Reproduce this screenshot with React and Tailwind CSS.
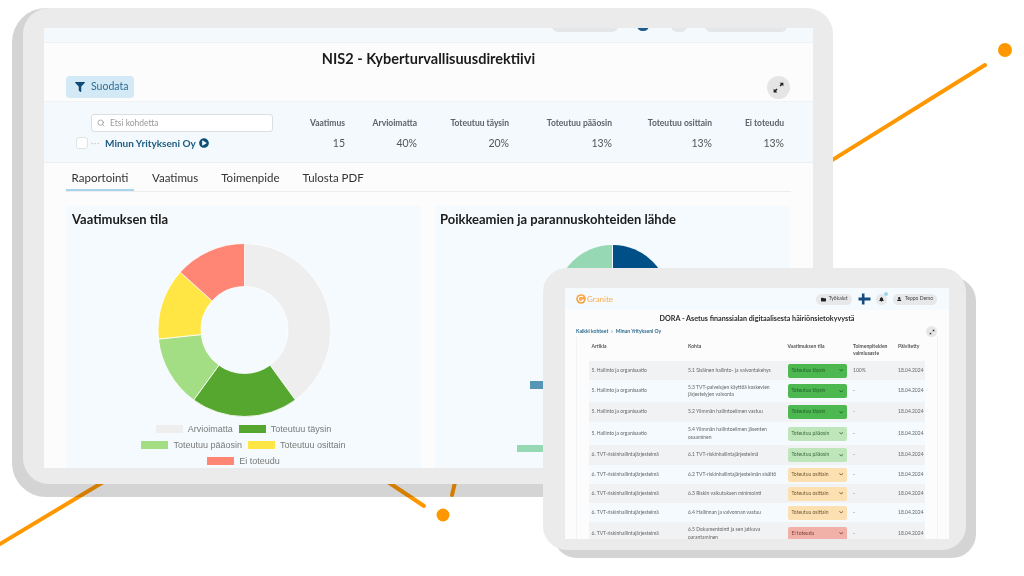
import React from "react";
import { FaFilter, FaPlayCircle, FaBell, FaUser, FaFolder, FaChevronDown } from "react-icons/fa";
import { FiSearch } from "react-icons/fi";

const summary = [
  ["Vaatimus", "15", "w-[60px]"],
  ["Arvioimatta", "40%", "w-[72px]"],
  ["Toteutuu täysin", "20%", "w-[92px]"],
  ["Toteutuu pääosin", "13%", "w-[103px]"],
  ["Toteutuu osittain", "13%", "w-[100px]"],
  ["Ei toteudu", "13%", "w-[72px]"],
];

const donut = [
  [0, 40, "#eeeeee"],
  [40, 60, "#56a730"],
  [60, 73.33, "#a3dd84"],
  [73.33, 86.66, "#ffe645"],
  [86.66, 100, "#ff8675"],
];

// annular sector, angles given as percent of the circle from 12 o'clock
function sector(from, to, cx, cy, r, inner) {
  const pt = (p, rad) => {
    const a = (p / 100) * Math.PI * 2;
    return `${(cx + rad * Math.sin(a)).toFixed(2)} ${(cy - rad * Math.cos(a)).toFixed(2)}`;
  };
  const large = to - from > 50 ? 1 : 0;
  return `M${pt(from, r)} A${r} ${r} 0 ${large} 1 ${pt(to, r)} L${pt(to, inner)} A${inner} ${inner} 0 ${large} 0 ${pt(from, inner)} Z`;
}

const legend = [
  [["bg-[#eeeeee]", "Arvioimatta"], ["bg-[#56a730]", "Toteutuu täysin"]],
  [["bg-[#a3dd84]", "Toteutuu pääosin"], ["bg-[#ffe645]", "Toteutuu osittain"]],
  [["bg-[#ff8675]", "Ei toteudu"]],
];

const statusStyle = {
  "Toteutuu täysin": "bg-[#4db84f] text-[#23602a]",
  "Toteutuu pääosin": "bg-[#bfe6bb] text-[#3c6b40]",
  "Toteutuu osittain": "bg-[#fde0b1] text-[#6d5a38]",
  "Ei toteudu": "bg-[#f2b1a8] text-[#7c4038]",
};

const org = "5. Hallinto ja organisaatio";
const tvt = "6. TVT-riskinhallintajärjestelmä";
const rows = [
  [org, "5.1 Sisäinen hallinto- ja valvontakehys", "Toteutuu täysin", "100%", "h-[19px]"],
  [org, "5.3 TVT-palvelujen käyttöä koskevien järjestelyjen valvonta", "Toteutuu täysin", "-", "h-[22px]"],
  [org, "5.2 Ylimmän hallintoelimen vastuu", "Toteutuu täysin", "-", "h-[20px]"],
  [org, "5.4 Ylimmän hallintoelimen jäsenten osaaminen", "Toteutuu pääosin", "-", "h-[23px]"],
  [tvt, "6.1 TVT-riskinhallintajärjestelmä", "Toteutuu pääosin", "-", "h-[20px]"],
  [tvt, "6.2 TVT-riskinhallintajärjestelmän sisältö", "Toteutuu osittain", "-", "h-[19px]"],
  [tvt, "6.3 Riskin vaikutuksen minimointi", "Toteutuu osittain", "-", "h-[19px]"],
  [tvt, "6.4 Hallinnan ja valvonnan vastuu", "Toteutuu osittain", "-", "h-[19px]"],
  [tvt, "6.5 Dokumentointi ja sen jatkuva parantaminen", "Ei toteudu", "-", "h-[23px]"],
];

function ExpandIcon({ size }) {
  return (
    <svg width={size} height={size} viewBox="0 0 16 16" fill="#222">
      <path d="M9.5 2H14v4.5L12.4 5 10.6 6.8 9.2 5.4 11 3.6zM6.5 14H2V9.5L3.6 11l1.8-1.8 1.4 1.4L5 12.4z" />
    </svg>
  );
}

function LargeTablet() {
  return (
    <div className="absolute left-[23px] top-[8px] w-[810px] h-[476px] rounded-[26px] bg-[#ebebeb] pt-[20px] pb-[16px] pl-[21px] pr-[20px]">
      <div className="h-full bg-[#fcfcfc] overflow-hidden font-['Lato',sans-serif] blur-[0.4px]">
        {/* clipped app bar */}
        <div className="relative h-[15px] bg-[#f3f9fc] border-b border-[#eef2f4]">
          <div className="absolute left-[508px] -top-[8px] w-[66px] h-[12px] rounded-full bg-[#e4e6e8]" />
          <div className="absolute left-[593px] -top-[8px] w-[12px] h-[11px] rounded-full bg-[#1d5d8a]" />
          <div className="absolute left-[627px] -top-[8px] w-[16px] h-[12px] rounded-full bg-[#e4e6e8]" />
          <div className="absolute left-[661px] -top-[8px] w-[82px] h-[12px] rounded-full bg-[#e4e6e8]" />
        </div>

        <h1 className="h-[30px] pt-[6px] text-center text-[14.5px] leading-[20px] font-bold text-[#1b1b1b]">
          NIS2 - Kyberturvallisuusdirektiivi
        </h1>

        <div className="flex items-center justify-between h-[29px] pl-[22px] pr-[23px] border-b border-[#f0f2f3]">
          <button className="flex items-center gap-[6px] w-[68px] h-[22px] pl-[9px] rounded-[4px] bg-[#d3e9f5] text-[10.5px] text-[#2f6d94]">
            <FaFilter className="text-[10px] text-[#0f4c75]" />
            Suodata
          </button>
          <div className="flex items-center justify-center w-[23px] h-[23px] rounded-full bg-[#e5e5e5]">
            <ExpandIcon size={13} />
          </div>
        </div>

        <div className="flex h-[61px] bg-[#f3f9fc] border-b border-[#eceff1]">
          <div className="w-[241px] pt-[12px] pl-[47px]">
            <div className="flex items-center gap-[5px] w-[182px] h-[18px] pl-[5px] bg-white border border-[#dcdfe1] rounded-[3px] text-[8.5px] text-[#9a9a9a]">
              <FiSearch className="text-[8px] text-[#888]" />
              Etsi kohdetta
            </div>
            <div className="flex items-center h-[16px] mt-[3px] -ml-[15px]">
              <span className="w-[12px] h-[12px] bg-white border border-[#dfe2e4] rounded-[3px]" />
              <span className="w-[17px] pl-[3px] text-[8px] leading-none tracking-[1px] text-[#b5b5b5]">···</span>
              <span className="text-[10px] font-bold text-[#1f5c82] whitespace-nowrap">Minun Yritykseni Oy</span>
              <FaPlayCircle className="ml-[3px] text-[10px] text-[#0f5078]" />
            </div>
          </div>
          <div className="flex pt-[14px] text-right">
            {summary.map(([label, value, width]) => (
              <div key={label} className={width}>
                <div className="h-[14px] text-[8.5px] leading-[14px] font-bold text-[#5b6268] whitespace-nowrap">{label}</div>
                <div className="mt-[6px] text-[10.5px] leading-[14px] text-[#555]">{value}</div>
              </div>
            ))}
          </div>
        </div>

        <div className="flex h-[29px] mx-[22px] border-b border-[#eaeced] text-[11.5px] text-[#333]">
          {["Raportointi", "Vaatimus", "Toimenpide", "Tulosta PDF"].map((tab, i) => (
            <div
              key={tab}
              className={
                i === 0
                  ? "w-[68px] h-[28px] pt-[6px] text-center border-b-2 border-[#a8d4ec] mr-[18px]"
                  : "h-[28px] pt-[6px] mr-[23px]"
              }
            >
              {tab}
            </div>
          ))}
        </div>

        <div className="flex gap-[14px] mt-[14px] mx-[22px]">
          <section className="w-[355px] h-[262px] bg-[#f4fafd] px-[6px] pt-[4px]">
            <h2 className="text-[13px] leading-[18px] font-bold text-[#1b1b1b]">Vaatimuksen tila</h2>
            <svg width="343" height="176" viewBox="0 0 343 176" className="mt-[14px]">
              {donut.map(([from, to, color]) => (
                <path key={color} d={sector(from, to, 172.5, 88, 86.5, 43.5)} fill={color} stroke="#ffffff" strokeWidth="0.8" />
              ))}
            </svg>
            <div className="flex flex-col items-center gap-[3.5px] mt-[5px] font-['Liberation_Sans',sans-serif] text-[9px] leading-[12.5px] text-[#7a7a7a]">
              {legend.map((line, i) => (
                <div key={i} className="flex gap-[6px]">
                  {line.map(([swatch, label]) => (
                    <div key={label} className="flex items-center gap-[5px]">
                      <span className={`w-[27px] h-[8px] ${swatch}`} />
                      {label}
                    </div>
                  ))}
                </div>
              ))}
            </div>
          </section>

          <section className="relative w-[355px] h-[262px] bg-[#f4fafd] px-[5px] pt-[4px]">
            <h2 className="text-[13px] leading-[18px] font-bold text-[#1b1b1b] whitespace-nowrap">
              Poikkeamien ja parannuskohteiden lähde
            </h2>
            <svg width="120" height="60" viewBox="0 0 120 60" className="absolute left-[117px] top-[39px]">
              <path d="M60 0 A56 56 0 0 0 4 56 L60 56 Z" fill="#96d7b4" />
              <path d="M61 0 A56 56 0 0 1 117 56 L61 56 Z" fill="#004f86" />
            </svg>
            <div className="absolute left-[95px] top-[175px] w-[20px] h-[8px] bg-[#5596b6]" />
            <div className="absolute left-[82px] top-[239px] w-[30px] h-[7px] bg-[#96d7b4]" />
          </section>
        </div>
      </div>
    </div>
  );
}

function SmallTablet() {
  return (
    <div className="absolute left-[543px] top-[268px] w-[423px] h-[282px] rounded-[24px] bg-[#ebebeb] pt-[20px] pb-[11px] pl-[22px] pr-[17px]">
      <div className="h-full bg-[#fcfcfc] overflow-hidden font-['Lato',sans-serif] blur-[0.5px]">
        <div className="flex items-center h-[22px] pl-[11px] pr-[12px] bg-[#f4fafd]">
          <svg width="10" height="10" viewBox="0 0 10 10">
            <circle cx="5" cy="5" r="4.8" fill="#f9a545" />
            <path d="M7 3.2A2.6 2.6 0 1 0 7.4 6H5.2" fill="none" stroke="#fff" strokeWidth="1.1" />
          </svg>
          <span className="ml-[1px] text-[8px] text-[#f9ae55]">Granite</span>
          <div className="flex items-center gap-[1px] ml-auto h-[11px] px-[5px] rounded-full bg-[#e7e8e9] text-[5px] text-[#444]">
            <FaFolder className="text-[5px] text-[#222] mr-[2px]" />
            Työkalut
          </div>
          <svg width="13" height="12" viewBox="0 0 12 12" className="ml-[6px]">
            <path d="M3.4 0.5h2.6v4h6v3h-6v4H3.4v-4H0v-3h3.4z" fill="#144c80" />
          </svg>
          <div className="relative flex items-center justify-center w-[11px] h-[11px] ml-[5px] rounded-full bg-[#e7e8e9]">
            <FaBell className="text-[5px] text-[#222]" />
            <span className="absolute -right-[1px] -top-[2px] w-[4px] h-[4px] rounded-full bg-[#9fd4ee]" />
          </div>
          <div className="flex items-center ml-[6px] h-[11px] px-[4px] rounded-full bg-[#e7e8e9] text-[5px] text-[#444]">
            <FaUser className="text-[4.5px] text-[#222] mr-[3px]" />
            Teppo Demo
          </div>
        </div>

        <h3 className="mt-[4px] text-center text-[7.2px] leading-[9px] font-bold text-[#2b2b2b] whitespace-nowrap">
          DORA - Asetus finanssialan digitaalisesta häiriönsietokyvystä
        </h3>

        <div className="flex items-center justify-between h-[11px] mt-[3px] pl-[11px] pr-[12px]">
          <span className="flex gap-[3px] text-[5px] font-bold text-[#2d6d8f]">
            <span>Kaikki kohteet</span>
            <span>›</span>
            <span>Minun Yritykseni Oy</span>
          </span>
          <span className="flex items-center justify-center w-[11px] h-[11px] rounded-full bg-[#e7e7e7]">
            <ExpandIcon size={6} />
          </span>
        </div>

        <div className="mx-[11px] px-[12px] h-[210px] border-x border-[#f0f2f3]">
          <div className="flex h-[24px] pl-[2.5px] pt-[6px] text-[5px] leading-[7.3px] font-bold text-[#555]">
            <div className="w-[96.5px]">Artikla</div>
            <div className="w-[99.5px]">Kohta</div>
            <div className="w-[65.5px]">Vaatimuksen tila</div>
            <div className="w-[45px]">Toimenpiteiden valmiusaste</div>
            <div>Päivitetty</div>
          </div>
          {rows.map(([article, point, status, ready, height], i) => (
            <div
              key={point}
              className={`flex items-center pl-[2.5px] text-[5px] leading-[7.3px] text-[#666] ${height} ${i % 2 === 0 ? "bg-[#f1f2f4]" : "bg-[#f4fafd]"}`}
            >
              <div className="w-[96.5px] whitespace-nowrap">{article}</div>
              <div className="w-[99.5px] pr-[6px]">{point}</div>
              <div className="w-[65.5px]">
                <div className={`flex items-center justify-between w-[59px] h-[14px] pl-[4px] pr-[3px] rounded-[2px] ${statusStyle[status]}`}>
                  {status}
                  <FaChevronDown className="text-[4.5px]" />
                </div>
              </div>
              <div className="w-[45px]">{ready}</div>
              <div>18.04.2024</div>
            </div>
          ))}
        </div>
      </div>
    </div>
  );
}

export default function App() {
  return (
    <div className="relative w-[1024px] h-[576px] overflow-hidden bg-white">
      {/* orange lines behind the tablets */}
      <svg width="1024" height="576" viewBox="0 0 1024 576" className="absolute left-0 top-0">
        <g stroke="#ff9800" strokeWidth="4" strokeLinecap="round" fill="none">
          <path d="M985 65 L760 205" />
          <path d="M-5 547 L130 466" />
          <path d="M370 470 L424 506" />
          <path d="M458 470 L452 495" />
        </g>
        <circle cx="1005" cy="50" r="7" fill="#ff9800" />
        <circle cx="443" cy="515" r="6.5" fill="#ff9800" />
      </svg>

      {/* tablet drop shadows */}
      <div className="absolute left-[12px] top-[8px] w-[810px] h-[489px] rounded-[34px] bg-black/[0.17]" />
      <div className="absolute left-[553px] top-[277px] w-[423px] h-[281px] rounded-[24px] bg-black/[0.17]" />

      <LargeTablet />
      <SmallTablet />
    </div>
  );
}
